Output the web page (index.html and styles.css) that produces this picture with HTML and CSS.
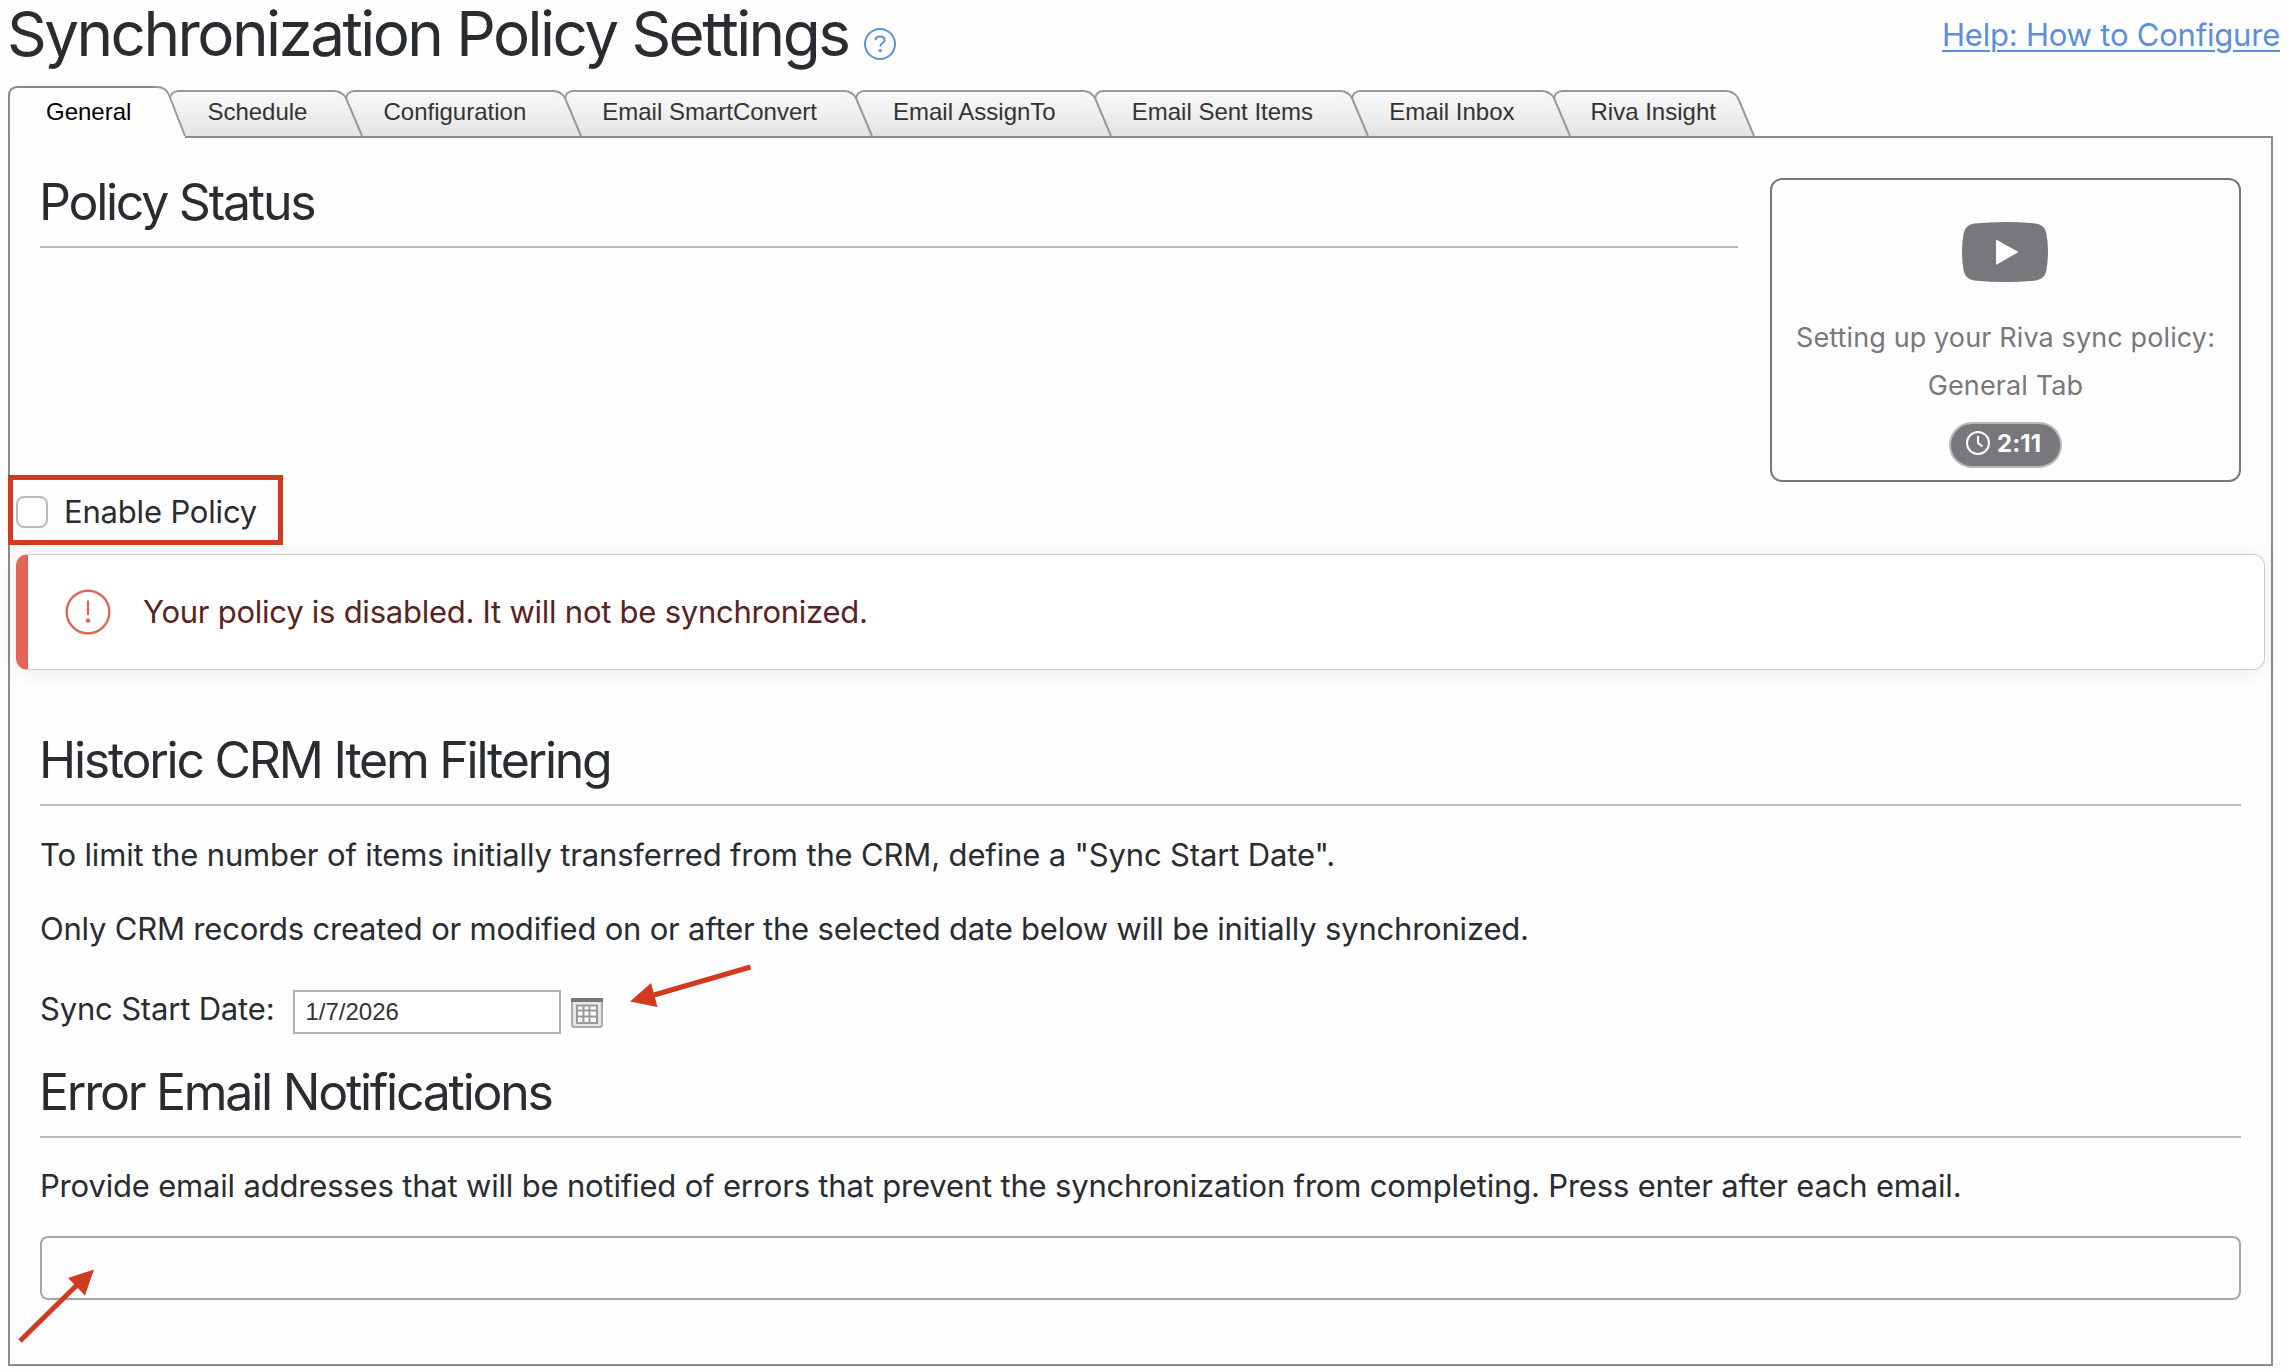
FILE: index.html
```
<!DOCTYPE html>
<html lang="en">
<head>
	<meta charset="utf-8">
	<title>Synchronization Policy Settings</title>
	<link rel="stylesheet" href="styles.css">
</head>
<body>

	<svg class="defs" width="0" height="0">
		<defs>
			<linearGradient id="tabFill" x1="0" y1="0" x2="0" y2="1">
				<stop offset="0" stop-color="#fafafa"/>
				<stop offset="1" stop-color="#e4e4e4"/>
			</linearGradient>
			<symbol id="edge" viewBox="0 0 32 46">
				<path class="edge-fill" d="M0 0H4C11 0 13 3 15 8L31 46H0Z"/>
				<path class="edge-line" d="M0 1H3C9 1 12 3 15 8L31 46"/>
			</symbol>
		</defs>
	</svg>

	<header class="header">
		<h1>Synchronization Policy Settings</h1>
		<svg class="help-icon" width="32" height="32" viewBox="0 0 32 32">
			<circle cx="16" cy="16" r="15"/>
			<path d="M11.5 12.2C11.5 9.8 13.4 8.6 16 8.6S20.6 10 20.6 12.2C20.6 15 16.2 15.2 16.2 18.6"/>
			<circle class="dot" cx="16.2" cy="22.6" r="1.7"/>
		</svg>
		<a class="help-link" href="#">Help: How to Configure</a>
	</header>

	<nav>
		<ul class="tabs">
			<li class="tab active"><span>General</span>
				<svg class="edge" width="32" height="52" viewBox="0 0 32 52">
					<path class="edge-fill" d="M0 0H3C9 1 12 3 15 8L30 50V52H0Z"/>
					<path class="edge-line" d="M0 1H2C8 1 12 4 14 9L30 50"/>
				</svg>
			</li>
			<li class="tab"><span>Schedule</span><svg class="edge" width="32" height="46"><use href="#edge"/></svg></li>
			<li class="tab"><span>Configuration</span><svg class="edge" width="32" height="46"><use href="#edge"/></svg></li>
			<li class="tab"><span>Email SmartConvert</span><svg class="edge" width="32" height="46"><use href="#edge"/></svg></li>
			<li class="tab"><span>Email AssignTo</span><svg class="edge" width="32" height="46"><use href="#edge"/></svg></li>
			<li class="tab"><span>Email Sent Items</span><svg class="edge" width="32" height="46"><use href="#edge"/></svg></li>
			<li class="tab"><span>Email Inbox</span><svg class="edge" width="32" height="46"><use href="#edge"/></svg></li>
			<li class="tab"><span>Riva Insight</span><svg class="edge" width="32" height="46"><use href="#edge"/></svg></li>
		</ul>
	</nav>

	<main class="panel">
		<section class="status">
			<h2>Policy Status</h2>
			<a class="video">
				<svg class="video-icon" width="86" height="60" viewBox="0 0 86 60">
					<path class="video-body" d="M12 1.5Q43 -1.5 74 1.5Q83 3 84.500 12Q87.500 30 84.500 48Q83 57 74 58.500Q43 61.500 12 58.500Q3 57 1.500 48Q-1.500 30 1.500 12Q3 3 12 1.500Z"/>
					<path class="video-play" d="M34 17.500L56.500 30L34 43Z"/>
				</svg>
				<span class="video-title">Setting up your Riva sync policy:<br>General Tab</span>
				<span class="duration">
					<svg width="24" height="24" viewBox="0 0 24 24"><circle cx="12" cy="12" r="11"/><path d="M12 5V12L16.500 15.500"/></svg>
					<b>2:11</b>
				</span>
			</a>
		</section>

		<label class="enable"><input type="checkbox">Enable Policy</label>

		<div class="alert">
			<svg width="46" height="46" viewBox="0 0 46 46">
				<circle cx="23" cy="23" r="21.300"/>
				<path d="M23 12.500V25"/>
				<circle class="dot" cx="23" cy="31.500" r="2.200"/>
			</svg>
			<span>Your policy is disabled. It will not be synchronized.</span>
		</div>

		<section class="filtering">
			<h2>Historic CRM Item Filtering</h2>
			<p class="intro">To limit the number of items initially transferred from the CRM, define a "Sync Start Date".</p>
			<p>Only CRM records created or modified on or after the selected date below will be initially synchronized.</p>
			<div class="date-row">
				<label for="startDate">Sync Start Date:</label>
				<input id="startDate" type="text" value="1/7/2026">
				<svg class="calendar" width="32" height="32" viewBox="0 0 32 32">
					<rect class="cal-frame" x="1" y="2" width="30" height="27" rx="2"/>
					<path class="cal-head" d="M0 2H32"/>
					<rect class="cal-page" x="5" y="7" width="22" height="19"/>
					<path class="cal-grid" d="M5 7.500H27M5 12.500H27M5 18.500H27M5 25H27M6 7V26M12.500 7V26M18.500 7V26M26 7V26"/>
				</svg>
			</div>
		</section>

		<section class="notifications">
			<h2>Error Email Notifications</h2>
			<p>Provide email addresses that will be notified of errors that prevent the synchronization from completing. Press enter after each email.</p>
			<input class="emails" type="text">
		</section>
	</main>

	<!-- callouts -->
	<div class="callout-box"></div>
	<svg class="callout callout-date" width="124" height="44" viewBox="0 0 124 44">
		<path class="shaft" d="M120.500 3L24 31"/>
		<path class="head" d="M0 37.500L21 19L27.500 43Z"/>
	</svg>
	<svg class="callout callout-emails" width="80" height="80" viewBox="0 0 80 80">
		<path class="shaft" d="M2 74L62 15"/>
		<path class="head" d="M76 2.500L50 11L67 28.500Z"/>
	</svg>

</body>
</html>
```

FILE: styles.css
```
* {
	box-sizing: border-box;
}

body {
	margin: 0;
	padding: 0 0 6px;
	background: #fefefe;
	color: #292c31;
	font-family: Inter, sans-serif;
	font-size: 31px;
	line-height: 48px;
	letter-spacing: -.18px;
}

h1, h2, p, ul {
	margin: 0;
	padding: 0;
}

.defs {
	position: absolute;
}

/* header */

.header {
	display: flex;
	align-items: flex-start;
	height: 86px;
	padding: 0 8px 0 7px;
}

h1 {
	font-size: 62px;
	font-weight: 400;
	line-height: 68px;
	letter-spacing: -2.55px;
}

.help-icon {
	margin: 28px 0 0 16px;
	fill: none;
	stroke: #5b8fdb;
	stroke-width: 2;
}

.help-icon .dot {
	fill: #5b8fdb;
	stroke: none;
}

.help-link {
	margin-left: auto;
	color: #5b8fdb;
	line-height: 70px;
	letter-spacing: -.21px;
	text-decoration-thickness: 2px;
	text-underline-offset: 4px;
}

/* tabs */

.tabs {
	position: relative;
	z-index: 1;
	display: flex;
	align-items: flex-end;
	height: 52px;
	margin: 0 0 -2px 8px;
	list-style: none;
	font: 24px/30px "Liberation Sans", Arial, sans-serif;
	letter-spacing: 0;
}

.tab {
	position: relative;
	display: flex;
	height: 46px;
	margin: 0 0 2px -18px;
	color: #333;
}

.tab span {
	padding: 5px 24px 0 36px;
	border: 2px solid #999;
	border-width: 2px 0 0 2px;
	border-radius: 9px 0 0 0;
	background: linear-gradient(#fafafa, #e4e4e4);
}

.tab:last-child span {
	padding-right: 7px;
}

.tab.active {
	height: 52px;
	margin: 0;
	color: #000;
}

.tab.active span {
	padding-top: 9px;
	border-color: #85888c;
	background: #fefefe;
}

.tab:nth-child(1) { z-index: 8; }
.tab:nth-child(2) { z-index: 7; }
.tab:nth-child(3) { z-index: 6; }
.tab:nth-child(4) { z-index: 5; }
.tab:nth-child(5) { z-index: 4; }
.tab:nth-child(6) { z-index: 3; }
.tab:nth-child(7) { z-index: 2; }

.edge-fill {
	fill: url(#tabFill);
}

.active .edge-fill {
	fill: #fefefe;
}

.edge-line {
	fill: none;
	stroke: #999;
	stroke-width: 2;
}

/* panel */

.panel {
	width: 2265px;
	height: 1230px;
	margin-left: 8px;
	border: 2px solid #888b90;
}

h2 {
	padding-bottom: 14px;
	border-bottom: 2px solid #bbb;
	font-size: 50px;
	font-weight: 400;
	line-height: 60px;
	letter-spacing: -2.25px;
	text-indent: -1px;
}

.status {
	display: flex;
	align-items: flex-start;
	gap: 32px;
	padding: 34px 30px 0;
}

.status h2 {
	flex: 1;
}

.video {
	display: flex;
	flex-direction: column;
	align-items: center;
	width: 471px;
	height: 304px;
	margin-top: 6px;
	padding-top: 42px;
	border: 2px solid #77787b;
	border-radius: 12px;
	color: #77787b;
	font-size: 27px;
	letter-spacing: .12px;
	text-align: center;
}

.video-icon {
	margin-right: 2px;
}

.video-body {
	fill: #77787b;
}

.video-play {
	fill: #fff;
}

.video-title {
	margin-top: 32px;
}

.duration {
	display: flex;
	gap: 7px;
	width: 113px;
	height: 46px;
	margin-top: 12px;
	padding: 7px 0 0 15px;
	border: 2px solid #b8b9bb;
	border-radius: 23px;
	background: #77787b;
	color: #fff;
	font-size: 24px;
	line-height: 26px;
}

.duration svg {
	fill: none;
	stroke: #fff;
	stroke-width: 2;
}

.enable {
	display: flex;
	align-items: center;
	gap: 16px;
	margin: 6px 0 0 6px;
}

.enable input {
	width: 32px;
	height: 32px;
	margin: 0;
	border: 2px solid #bbb;
	border-radius: 8px;
	background: #fff;
	appearance: none;
}

.alert {
	display: flex;
	align-items: center;
	gap: 32px;
	height: 116px;
	margin: 18px 6px 0;
	padding-left: 37px;
	border: 1px solid #ccc;
	border-left: 12px solid #e26456;
	border-radius: 12px;
	background: #fff;
	box-shadow: 0 2px 24px rgba(0, 0, 0, .08);
	color: #59231f;
	letter-spacing: -.25px;
}

.alert svg {
	fill: none;
	stroke: #e26456;
	stroke-width: 2.4;
	stroke-linecap: round;
}

.alert .dot {
	fill: #e26456;
	stroke: none;
}

.filtering {
	padding: 60px 30px 0;
}

.filtering p {
	margin-top: 26px;
	letter-spacing: -.2px;
}

.filtering .intro {
	margin-top: 25px;
	letter-spacing: -.15px;
}

.date-row {
	display: flex;
	align-items: flex-start;
	height: 49px;
	margin-top: 32px;
}

.date-row input {
	width: 268px;
	height: 44px;
	margin: 5px 0 0 19px;
	padding: 0 10px;
	border: 2px solid #b1b1b1;
	background: #fff;
	color: #333;
	font: 24px "Liberation Sans", Arial, sans-serif;
}

.calendar {
	margin: 13px 0 0 10px;
}

.cal-frame {
	fill: #e6e6e6;
	stroke: #aaa;
	stroke-width: 2;
}

.cal-head {
	stroke: #777;
	stroke-width: 4;
}

.cal-page {
	fill: #fff;
}

.cal-grid {
	fill: none;
	stroke: #999;
	stroke-width: 2;
}

.notifications {
	padding: 28px 30px 0;
}

.notifications p {
	margin-top: 24px;
}

.emails {
	display: block;
	width: 100%;
	height: 64px;
	margin-top: 26px;
	border: 2px solid #a6a6a6;
	border-radius: 8px;
	background: #fefefe;
}

/* callouts lie over the form */

.callout-box {
	position: absolute;
	left: 8px;
	top: 475px;
	width: 275px;
	height: 70px;
	border: 5px solid #d13a21;
}

.callout {
	position: absolute;
}

.callout-date {
	left: 630px;
	top: 964px;
}

.callout-emails {
	left: 18px;
	top: 1267px;
}

.shaft {
	stroke: #d13a21;
	stroke-width: 5;
}

.head {
	fill: #d13a21;
}
```
